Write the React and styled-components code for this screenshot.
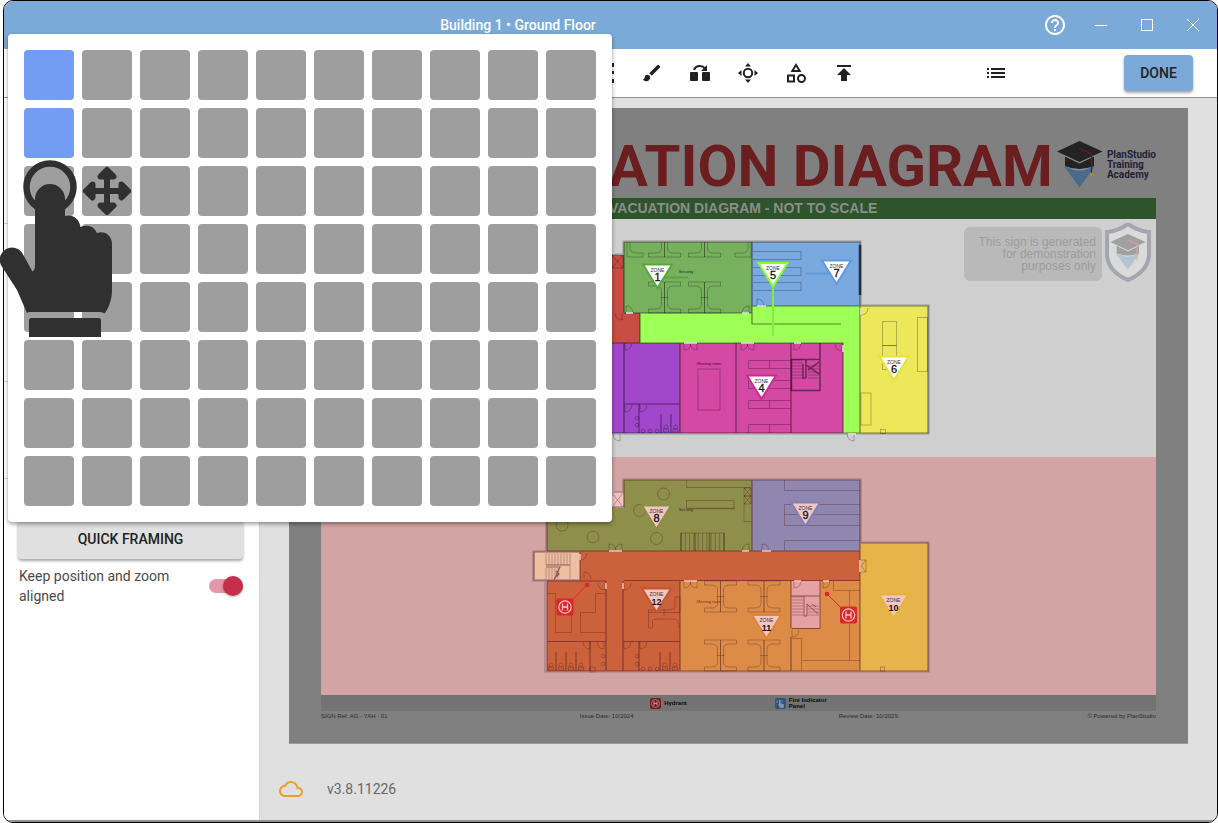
import React from "react";
import styled, { createGlobalStyle } from "styled-components";
import {
  MdBrush,
  MdCloudQueue,
  MdHelpOutline,
  MdList,
  MdOutlineCategory,
  MdPublish,
} from "react-icons/md";

const GlobalStyle = createGlobalStyle`
  *, *::before, *::after { box-sizing: border-box; }
  body {
    margin: 0;
    background: #ffffff;
    font-family: Roboto, "Liberation Sans", sans-serif;
    font-size: 14px;
    color: #222222;
  }
  button { font-family: inherit; }
`;

const Page = styled.div`
  position: relative;
  min-height: 100vh;
  padding-left: 3px;
  display: flex;
`;

const Window = styled.div`
  flex: 1;
  min-width: 0;
  display: flex;
  flex-direction: column;
  border: 1px solid #000000;
  border-radius: 10px;
  overflow: hidden;
  background: #ffffff;
`;

const TitleBar = styled.header`
  display: flex;
  align-items: center;
  height: 48px;
  padding-right: 1px;
  background: #7baad8;
  color: #ffffff;
`;

const WindowTitle = styled.div`
  flex: 1;
  text-align: center;
  font-size: 14px;
  font-weight: 500;
  line-height: 20px;
`;

const WindowButton = styled.button`
  display: flex;
  align-items: center;
  justify-content: center;
  width: 46px;
  height: 48px;
  padding: 0;
  border: 0;
  background: transparent;
  color: inherit;
`;

const Toolbar = styled.div`
  display: flex;
  align-items: center;
  justify-content: flex-end;
  gap: 104px;
  height: 49px;
  padding-right: 24px;
  border-bottom: 1px solid #8f8f8f;
`;

const ToolGroup = styled.div`
  display: flex;
`;

const ToolButton = styled.button`
  display: flex;
  align-items: center;
  justify-content: center;
  width: 48px;
  height: 48px;
  padding: 0;
  border: 0;
  background: transparent;
  color: #212121;
`;

const RaisedButton = styled.button`
  width: ${(p) => (p.$block ? "100%" : "69px")};
  height: ${(p) => (p.$block ? "40px" : "36px")};
  padding: 0;
  border: 0;
  border-radius: 4px;
  background: ${(p) => (p.$primary ? "#7baad8" : "#e0e0e0")};
  color: #222222;
  font-size: 14px;
  font-weight: 500;
  line-height: 20px;
  box-shadow: 0 2px 3px rgba(0, 0, 0, 0.35);
`;

const Body = styled.div`
  flex: 1;
  display: flex;
  border-bottom: 2px solid #8f8f8f;
`;

const Sidebar = styled.aside`
  flex: none;
  width: 256px;
  border-right: 1px solid #d6d6d6;
  background: #ffffff;
`;

const SidebarSection = styled.section`
  height: ${(p) => p.$size}px;
  border-bottom: 1px solid #d9d9d9;
`;

const Framing = styled.section`
  padding: 40px 16px 0 14px;
`;

const SwitchRow = styled.label`
  display: flex;
  align-items: center;
  justify-content: space-between;
  gap: 24px;
  margin-top: 7px;
  padding-left: 1px;
  font-size: 14px;
  line-height: 20px;
  color: #4a4a4a;
`;

const Switch = styled.input`
  appearance: none;
  flex: none;
  display: flex;
  align-items: center;
  justify-content: flex-end;
  width: 34px;
  height: 14px;
  margin: 0;
  border-radius: 7px;
  background: #e497a7;
  &::before {
    content: "";
    flex: none;
    width: 20px;
    height: 20px;
    border-radius: 50%;
    background: #c62f4c;
    box-shadow: 0 1px 3px rgba(0, 0, 0, 0.3);
  }
`;

const Main = styled.main`
  flex: 1;
  min-width: 0;
  padding: 10px 29px 0;
  background: #e0e0e0;
`;

const Sheet = styled.article`
  padding: 0 32px 21px;
  background: #808080;
  border-bottom: 1px solid #9a9a9a;
`;

const SheetHeader = styled.header`
  display: flex;
  justify-content: flex-end;
  align-items: flex-end;
  gap: 4px;
  height: 90px;
`;

const SheetTitle = styled.h1`
  margin: 0;
  font-size: 58px;
  font-weight: 700;
  line-height: 64px;
  white-space: nowrap;
  color: #6a1e20;
`;

const Brand = styled.div`
  display: flex;
  align-items: center;
  gap: 4px;
  padding-bottom: 10px;
  font-size: 10px;
  font-weight: 700;
  line-height: 10px;
  white-space: nowrap;
  color: #1f1f38;
`;

const Banner = styled.div`
  height: 21px;
  background: #2d542a;
  color: #8c8c8c;
  font-family: "Liberation Sans", sans-serif;
  font-size: 14px;
  font-weight: 700;
  line-height: 21px;
  text-align: center;
  white-space: nowrap;
`;

const Plan = styled.div`
  position: relative;
  background: ${(p) => p.$tint};
  svg.plan {
    display: block;
    width: 100%;
    height: auto;
  }
`;

const Notice = styled.div`
  position: absolute;
  top: 4px;
  right: 4px;
  display: flex;
  align-items: center;
  gap: 2px;
`;

const NoticeText = styled.p`
  width: 138px;
  margin: 0;
  padding: 9px 6px;
  border-radius: 6px;
  background: #b9b9b9;
  color: #9c9c9c;
  font-family: "Liberation Sans", sans-serif;
  font-size: 12px;
  line-height: 12px;
  text-align: right;
  white-space: nowrap;
`;

const Legend = styled.div`
  display: flex;
  justify-content: center;
  gap: 88px;
  height: 16px;
  background: #737373;
`;

const LegendItem = styled.div`
  display: flex;
  align-items: center;
  gap: 3px;
  color: #0c0c0c;
  font-family: "Liberation Sans", sans-serif;
  font-size: 6px;
  font-weight: 700;
  line-height: 6px;
`;

const SheetFooter = styled.footer`
  display: grid;
  grid-template-columns: 31% 31% 1fr auto;
  color: #2c2c2c;
  font-family: "Liberation Sans", sans-serif;
  font-size: 6px;
  line-height: 11px;
`;

const StatusBar = styled.footer`
  display: flex;
  align-items: center;
  gap: 24px;
  margin: 33px -10px 0;
  font-size: 14px;
  line-height: 20px;
  color: #666666;
`;

const CellPanel = styled.div`
  position: absolute;
  top: 34px;
  left: 8px;
  display: grid;
  grid-template-columns: repeat(10, 50px);
  grid-auto-rows: 50px;
  gap: 8px;
  padding: 16px;
  border-radius: 4px;
  background: #ffffff;
  box-shadow: 0 2px 4px rgba(0, 0, 0, 0.4);
`;

const Cell = styled.button`
  padding: 0;
  border: 0;
  border-radius: 4px;
  background: ${(p) => (p.$selected ? "#739df2" : "#9e9e9e")};
`;

const Gesture = styled.svg`
  position: absolute;
  top: 158px;
  left: 0;
  pointer-events: none;
`;

/* ---------- icons ---------- */

const MinimizeIcon = () => (
  <svg width="14" height="14" viewBox="0 0 14 14" stroke="currentColor" fill="none">
    <path d="M1 7.5H13" />
  </svg>
);
const MaximizeIcon = () => (
  <svg width="14" height="14" viewBox="0 0 14 14" stroke="currentColor" fill="none">
    <rect x="1.500" y="1.500" width="11" height="11" />
  </svg>
);
const CloseIcon = () => (
  <svg width="14" height="14" viewBox="0 0 14 14" stroke="currentColor" fill="none">
    <path d="M1 1L13 13M13 1L1 13" />
  </svg>
);
const GridIcon = () => (
  <svg width="24" height="24" viewBox="0 0 24 24" fill="currentColor">
    <path d="M2 2h4v4H2zM10 2h4v4h-4zM18 2h4v4h-4zM2 10h4v3H2zM10 10h4v3h-4zM18 10h4v3h-4zM2 18h4v4H2zM10 18h4v4h-4zM18 18h4v4h-4z" />
  </svg>
);
const SwapIcon = () => (
  <svg width="24" height="24" viewBox="0 0 24 24">
    <rect x="2" y="11" width="8" height="9" rx="1" fill="currentColor" />
    <rect x="14" y="11" width="8" height="9" rx="1" fill="currentColor" />
    <path d="M6 9C7.500 4.500 14 3.600 17 7.600" fill="none" stroke="currentColor" strokeWidth="2" />
    <path d="M19 4V10H13z" fill="currentColor" />
  </svg>
);
const RecenterIcon = () => (
  <svg width="24" height="24" viewBox="0 0 24 24" fill="currentColor">
    <circle cx="12" cy="12" r="4.200" fill="none" stroke="currentColor" strokeWidth="2" />
    <path d="M12 2L15 5.500H9zM12 22L9 18.500H15zM2 12L5.500 9V15zM22 12L18.500 15V9z" />
  </svg>
);

const CapShapes = () => (
  <>
    <path d="M8 25Q8 27 9 28L22.500 46.500L36 28Q37 27 37 25Q22 31 8 25z" fill="#4a6a8c" />
    <path d="M10 26Q22 21 35 26Q22 33 10 26z" fill="#8d9399" />
    <path d="M8 15V25Q22 31 37 25V15L22.500 22z" fill="#232323" />
    <path d="M7 14.500L22.500 22L38 14.500" fill="none" stroke="#8a8a8a" />
    <path d="M0 10.500L22.500 0L45.500 10.500L22.500 21z" fill="#232323" />
    <path d="M22.500 7.500L34.500 13V32" fill="none" stroke="#6d1730" strokeWidth="1.200" />
    <circle cx="34.500" cy="33.500" r="1.800" fill="#a58a32" />
  </>
);
const BrandMark = () => (
  <svg width="46" height="47" viewBox="0 0 46 47">
    <CapShapes />
  </svg>
);
const FadedCapShapes = () => (
  <>
    <path d="M8 25Q8 27 9 28L22.500 46.500L36 28Q37 27 37 25Q22 31 8 25z" fill="#b4c3d2" />
    <path d="M10 26Q22 21 35 26Q22 33 10 26z" fill="#dcdcdc" />
    <path d="M8 15V25Q22 31 37 25V15L22.500 22z" fill="#a0a0a0" />
    <path d="M7 14.500L22.500 22L38 14.500" fill="none" stroke="#d8d8d8" />
    <path d="M0 10.500L22.500 0L45.500 10.500L22.500 21z" fill="#a0a0a0" />
    <path d="M22.500 7.500L34.500 13V32" fill="none" stroke="#dba79c" strokeWidth="1.400" />
    <circle cx="34.500" cy="33.500" r="1.800" fill="#d8cda8" />
  </>
);
const ShieldMark = () => (
  <svg width="48" height="62" viewBox="0 2 48 62">
    <path
      d="M24 3Q34 10 45 11V35Q43 51 24 59Q5 51 3 35V11Q14 10 24 3z"
      fill="#dadada"
      stroke="#a3a6b0"
      strokeWidth="4"
    />
    <g transform="translate(6.500 13) scale(.77)">
      <FadedCapShapes />
    </g>
  </svg>
);
const HydrantIcon = () => (
  <svg width="11" height="11" viewBox="0 0 11 11">
    <rect width="11" height="11" rx="2" fill="#7d1a1d" />
    <circle cx="5.500" cy="5.500" r="4" fill="none" stroke="#a88a8a" strokeWidth=".8" />
    <path d="M4 3.300V7.700M7 3.300V7.700M4 5.500H7" stroke="#b09a9a" fill="none" />
  </svg>
);
const PanelIcon = () => (
  <svg width="11" height="11" viewBox="0 0 11 11">
    <rect width="11" height="11" rx="2" fill="#2f5480" />
    <path d="M4 2V6L3 6L5 10H8.500L9 6.500L5.500 5V2z" fill="#8295a8" />
    <path d="M2 2V5M7 2V4" stroke="#7085a0" fill="none" />
  </svg>
);

/* ---------- floor plan parts (drawn in plan units) ---------- */

const Zone = ({ x, y, n, color, fill = "#ffffff" }) => (
  <g>
    <path d={`M${x - 14.5} ${y}H${x + 14.5}L${x} ${y + 23.5}z`} fill={fill} stroke={color} strokeWidth="2" />
    <text x={x} y={y + 7} fontSize="5" fill="#333333">ZONE</text>
    <text x={x} y={y + 16} fontSize={n > 9 ? 9 : 11} fontWeight={n > 9 ? 700 : 400} fill="#111111" stroke="#111111" strokeWidth={n > 9 ? 0 : 0.3}>
      {n}
    </text>
  </g>
);

const Desks = ({ x, y1, y2, sides = [-1, 1], half }) => (
  <path
    d={sides
      .map((s) =>
        half
          ? `M${x} ${y1}V${y2}H${x + 16 * s}V${y2 - 4}H${x + 9 * s}Q${x + 3 * s} ${y2 - 4} ${x + 3 * s} ${y2 - 9}V${y1}`
          : `M${x + 16 * s} ${y1}V${y1 + 4}H${x + 9 * s}Q${x + 3 * s} ${y1 + 4} ${x + 3 * s} ${y1 + 9}V${y2 - 9}Q${x + 3 * s} ${y2 - 4} ${x + 9 * s} ${y2 - 4}H${x + 16 * s}V${y2}H${x}V${y1}zM${x} ${(y1 + y2) / 2}H${x + 4 * s}`
      )
      .join("")}
  />
);

const Treads = ({ x, y, w, h, step = 3, vertical }) => {
  let d = "";
  if (vertical) for (let i = 0; i <= w; i += step) d += `M${x + i} ${y}v${h}`;
  else for (let i = 0; i <= h; i += step) d += `M${x} ${y + i}h${w}`;
  return <path d={d} />;
};

const Door = ({ x, y, sx = 1, sy = 1, r = 7 }) => (
  <path d={`M${x} ${y}v${r * sy}q${r * sx * 0.9} 0 ${r * sx} ${-r * sy}`} />
);

const Toilet = ({ x, y }) => (
  <g>
    <circle cx={x} cy={y} r="2" />
    <rect x={x - 2.5} y={y + 2} width="5" height="3" />
  </g>
);

const Basin = ({ x, y }) => <circle cx={x} cy={y} r="1.800" />;

const Hydrant = ({ x, y, px, py }) => (
  <g fill="none">
    <path d={`M${x} ${y}L${px} ${py}`} stroke="#d8282b" />
    <circle cx={px} cy={py} r="2.300" fill="#d8282b" />
    <rect x={x - 8.5} y={y - 8.5} width="17" height="17" rx="2" fill="#d8282b" />
    <circle cx={x} cy={y} r="6.200" stroke="#f3c4c4" strokeWidth="1.200" />
    <path d={`M${x - 2.5} ${y - 3.500}v7M${x + 2.5} ${y - 3.500}v7M${x - 2.5} ${y}h5`} stroke="#f3c4c4" strokeWidth="1.300" />
  </g>
);

const GroundPlan = () => (
  <svg className="plan" viewBox="321 219 835 238" fontFamily="Liberation Sans, sans-serif" textAnchor="middle">
    <path d="M546 255H616V254H623V241H861V305H929V434H546z" fill="#dcdcdc" stroke="#9a9a9a" strokeWidth="1.200" />
    <path d="M547 255H624V313H640V343H547z" fill="#c94d45" />
    <rect x="624" y="242" width="128" height="71" fill="#78b15e" />
    <rect x="752" y="242" width="108" height="64" fill="#7aa9e0" />
    <path d="M640 313H752V306H860V433H843V343H640z" fill="#9eff57" />
    <rect x="547" y="343" width="133" height="90" fill="#a147cb" />
    <rect x="680" y="343" width="163" height="90" fill="#d349a3" />
    <rect x="860" y="306" width="68" height="127" fill="#ece85a" />
    <g fill="none" stroke="#000000" strokeOpacity=".48">
      <path d="M624 242H860V306H928V433H547M624 242V313M752 242V324H841M624 313H752M860 306V433M752 306H860M640 313V343M547 343H843V433M680 343V433M736 343V433M791 343V433M624 343V433M624 404H680" strokeWidth="1.200" />
      <path d="M791.500 359.500H820V390.500H791.500zM820 343V360" strokeWidth="1.500" />
      <path d="M806 360V378M803 364V378H806M806 365L819 374M808 370L819 362" strokeWidth="1.500" />
    </g>
    <g fill="none" stroke="#000000" strokeOpacity=".32" strokeWidth=".8">
      <Desks x={627} y1={242} y2={257} sides={[1]} half />
      <Desks x={664.5} y1={242} y2={257} half />
      <Desks x={704.5} y1={242} y2={257} half />
      <Desks x={751} y1={242} y2={257} sides={[-1]} half />
      <Desks x={664.5} y1={282} y2={313} />
      <Desks x={704.5} y1={282} y2={313} />
      <path d="M753 251.500H801V259.500H753M753 267.500H801V275.500H753M753 282.500H801V290.500H753" />
      <path d="M748.500 360.500H791M748.500 360.500V368.500H791M748.500 380.500V388.500H791M748.500 380.500H791M748.500 400.500V408.500H791M748.500 400.500H791M748.500 424.500V433M748.500 424.500H791M769.500 360.500V368.500M769.500 400.500V408.500M769.500 424.500V433" />
      <rect x="698" y="369" width="22" height="41" />
      <rect x="882.500" y="321.500" width="14" height="24" />
      <rect x="882.500" y="345.500" width="14" height="24" />
      <rect x="917.500" y="317.500" width="10" height="54" />
      <rect x="861" y="393" width="10" height="32" />
      <rect x="880.500" y="429.500" width="5" height="4" />
      <path d="M612 255H623V268H612zM612 255L623 268M623 255L612 268" />
      <path d="M661 414V433M671 414V433M639 404V433" strokeWidth="1.500" />
      <Toilet x={666} y={427} />
      <Toilet x={675.5} y={427} />
      <Basin x={643} y={431} />
      <Basin x={650} y={431} />
      <Basin x={657} y={431} />
      <Basin x={637} y={418} />
      <Basin x={637} y={425} />
      <Treads x={792} y={360} w={11} h={20} />
      <Treads x={808} y={366} w={11} h={12} />
      <Door x={626} y={313} sy={-1} />
      <Door x={749} y={313} sx={-1} sy={-1} />
      <Door x={757} y={306} sy={-1} />
      <Door x={684} y={343} />
      <Door x={697} y={343} sx={-1} />
      <Door x={741} y={343} />
      <Door x={754} y={343} sx={-1} />
      <Door x={794} y={343} />
      <Door x={842} y={344} sx={-1} />
      <Door x={625} y={343} />
      <Door x={625} y={405} />
      <Door x={640} y={405} />
      <Door x={861} y={308} />
      <Door x={854} y={434} sx={-1} />
      <Door x={620} y={434} sx={-1} />
      <Door x={622} y={313} sx={-1} />
    </g>
    <path d="M684 343H697M741 343H754M794 343H801M626 313H633M742 313H749M757 306H766M843 345V352M848 434H856M861 308V315" stroke="#e8e8e8" strokeWidth="1.500" />
    <path d="M860 245V295" stroke="#2b2b33" strokeWidth="2.500" />
    <path d="M657 277.500H688" stroke="#58a83c" strokeWidth="2" />
    <path d="M806 273.500H832" stroke="#5f9be0" strokeWidth="2" />
    <path d="M773 285V336" stroke="#7ff03c" strokeWidth="2" />
    <text x="686" y="273" fontSize="4" fill="#222222">Security</text>
    <text x="709" y="365" fontSize="4" fill="#4a1538">Meeting room</text>
    <Zone x={657.5} y={264.5} n={1} color="#58a83c" />
    <Zone x={773} y={263} n={5} color="#86ff2e" />
    <Zone x={836.5} y={260.5} n={7} color="#5f9be0" />
    <Zone x={761.5} y={375.5} n={4} color="#cb2a96" />
    <Zone x={894} y={356.5} n={6} color="#e8e23c" />
  </svg>
);

const PINK = "#f3c6c6";

const UpperPlan = () => (
  <svg className="plan" viewBox="321 457 835 238" fontFamily="Liberation Sans, sans-serif" textAnchor="middle">
    <path d="M546 507H615V492H623V479H861V542H929V672H545V581H533V551H546z" fill="#dcb4b4" stroke="#a17a7e" strokeWidth="1.200" />
    <path d="M547 508H624V480H752V551H547z" fill="#8e8f4b" />
    <rect x="752" y="480" width="108" height="71" fill="#9087b0" />
    <path d="M580 551H860V581H680V671H547V581H580z" fill="#cc623b" />
    <rect x="534" y="552" width="46" height="28" fill="#efbfa4" />
    <rect x="680" y="581" width="180" height="90" fill="#dc8c47" />
    <rect x="791" y="581" width="29" height="47" fill="#e6a1a3" />
    <rect x="860" y="543" width="68" height="128" fill="#e6b44b" />
    <rect x="612" y="493" width="11" height="14" fill="#f0c0c4" />
    <g fill="none" stroke="#5a1a20" strokeOpacity=".58">
      <path d="M624 480H860V671M752 480V551M547 551H860M860 543H928V671H547V581H606M547 508V551M624 580.500H860M680 581V671M606 581V671M623 581V671M547 641.500H606M623 641.500H680M534 552H580V580H534zM612 507H624V480M791 581V628M791 637V671" strokeWidth="1.200" />
      <path d="M791.500 628.500H820V581M820 596H791" />
      <path d="M804 596V616H807V604L818 614M812 604L816 607" />
      <path d="M546 565H570M546 567H560L554 580M556 571L559 574L556 577" strokeWidth="1.200" />
    </g>
    <g fill="none" stroke="#4a1a1a" strokeOpacity=".4" strokeWidth=".8">
      <circle cx="663.500" cy="494" r="6" />
      <circle cx="639.500" cy="510.500" r="6" />
      <circle cx="656.500" cy="538.500" r="6" />
      <circle cx="593" cy="537" r="6" />
      <circle cx="562" cy="525" r="6" />
      <path d="M612 493L623 507M623 493L612 507" />
      <path d="M751 487.500H686.500V480M686.500 508V500.500H734V508" />
      <path d="M686.500 508.500H735" strokeWidth="1.500" />
      <path d="M744 488h7v8h-7zl7 8m0-8l-7 8M744 496h7v8h-7zl7 8m0-8l-7 8M744 504v17.500h7" />
      <path d="M784.500 480V490.500H860M784.500 504.500H860M784.500 504.500V525.500H860M784.500 514.500H860M784.500 551V540.500H860" />
      <Treads x={681} y={533} w={43} h={18} step={4.3} vertical />
      <path d="M681 533H724" />
      <path d="M681 533V551M695 533V551M709.500 533V551M724 533V551" strokeWidth="1.500" />
      <Treads x={546} y={553} w={24} h={12} vertical />
      <Treads x={546} y={568} w={12} h={11} vertical />
      <path d="M570 565V579" />
      <Treads x={792} y={597} w={11} h={18} />
      <Treads x={808} y={606} w={11} h={10} />
      <path d="M547 593.500H555.500V632.500H571.500V612.500H563M605 593.500H595.500V612.500H580.500V632.500H605" />
      <path d="M680 597H675V607Q675 610 665 610H648.500V628H652.500V622Q652 619 658 619H674Q679 619 679 628M664 609V616M648.500 612.500H680V597" />
      <path d="M833.500 581V590.500H860M849.500 590.500V660.500M802 660.500H860M792 638.500H801.500V671" />
      <Desks x={720.5} y1={581} y2={612} />
      <Desks x={720.5} y1={640} y2={671} />
      <Desks x={764} y1={581} y2={612} />
      <Desks x={764} y1={640} y2={671} />
      <path d="M556 652V671M566 652V671M576 652V671M590 641V671M660 652V671M670 652V671M639 641V671" strokeWidth="1.500" />
      <Toilet x={551} y={665} />
      <Toilet x={561} y={665} />
      <Toilet x={571} y={665} />
      <Toilet x={581} y={665} />
      <Toilet x={665} y={665} />
      <Toilet x={675} y={665} />
      <Basin x={643} y={669} />
      <Basin x={650} y={669} />
      <Basin x={657} y={669} />
      <Basin x={603} y={656} />
      <Basin x={603} y={664} />
      <Basin x={637} y={656} />
      <Basin x={637} y={664} />
      <rect x="590" y="667" width="5" height="5" />
      <rect x="880.500" y="667" width="4" height="4" />
      <Door x={609} y={551} sy={-1} />
      <Door x={622} y={551} sx={-1} sy={-1} />
      <Door x={749} y={551} sx={-1} sy={-1} />
      <Door x={762} y={551} sy={-1} />
      <Door x={580} y={553} />
      <Door x={584} y={579} sy={-1} />
      <Door x={605} y={583} sx={-1} />
      <Door x={624} y={583} />
      <Door x={684} y={581} />
      <Door x={697} y={581} sx={-1} />
      <Door x={794} y={581} />
      <Door x={823} y={581} />
      <Door x={792} y={630} />
      <Door x={590} y={642} sx={-1} />
      <Door x={604} y={642} sx={-1} />
      <Door x={624} y={642} />
      <Door x={640} y={642} />
      <path d="M860 560H866V572H860M861 566L866 560M861 566L866 572" />
    </g>
    <path d="M609 551H622M742 551H749M762 551H771M684 581H697M794 581H801M823 581H829M860 560V572M580 554V560M606 583V589M623 583V589" stroke={PINK} strokeWidth="1.500" />
    <text x="686" y="511" fontSize="4" fill="#4a2a1a">Security</text>
    <text x="709" y="603" fontSize="4" fill="#6a3a1a">Meeting room</text>
    <Zone x={656.5} y={505.5} n={8} color="#8a9040" fill={PINK} />
    <Zone x={805.5} y={502.5} n={9} color="#8480b4" fill={PINK} />
    <Zone x={656.5} y={588.5} n={12} color="#c8552a" fill={PINK} />
    <Zone x={766.5} y={615} n={11} color="#e08430" fill={PINK} />
    <Zone x={893.5} y={594.5} n={10} color="#e8b438" fill={PINK} />
    <Hydrant x={565} y={607} px={587} py={585} />
    <Hydrant x={848.5} y={615} px={827} py={594} />
  </svg>
);

const COLUMNS = 10;
const ROWS = 8;
const SELECTED = [0, 10];

export default function App() {
  return (
    <Page>
      <GlobalStyle />
      <Window>
        <TitleBar>
          <WindowTitle>Building 1 • Ground Floor</WindowTitle>
          <WindowButton aria-label="Help"><MdHelpOutline size={24} /></WindowButton>
          <WindowButton aria-label="Minimize"><MinimizeIcon /></WindowButton>
          <WindowButton aria-label="Maximize"><MaximizeIcon /></WindowButton>
          <WindowButton aria-label="Close"><CloseIcon /></WindowButton>
        </TitleBar>
        <Toolbar>
          <ToolGroup>
            <ToolButton aria-label="Grid"><GridIcon /></ToolButton>
            <ToolButton aria-label="Brush"><MdBrush size={22} /></ToolButton>
            <ToolButton aria-label="Swap"><SwapIcon /></ToolButton>
            <ToolButton aria-label="Recenter"><RecenterIcon /></ToolButton>
            <ToolButton aria-label="Symbols"><MdOutlineCategory size={24} /></ToolButton>
            <ToolButton aria-label="Bring to top"><MdPublish size={24} /></ToolButton>
          </ToolGroup>
          <ToolButton aria-label="List"><MdList size={24} /></ToolButton>
          <RaisedButton $primary>DONE</RaisedButton>
        </Toolbar>
        <Body>
          <Sidebar>
            <SidebarSection $size={126} />
            <SidebarSection $size={158} />
            <SidebarSection $size={97} />
            <Framing>
              <RaisedButton $block>QUICK FRAMING</RaisedButton>
              <SwitchRow>
                Keep position and zoom aligned
                <Switch type="checkbox" role="switch" defaultChecked />
              </SwitchRow>
            </Framing>
          </Sidebar>
          <Main>
            <Sheet>
              <SheetHeader>
                <SheetTitle>EVACUATION DIAGRAM</SheetTitle>
                <Brand>
                  <BrandMark />
                  <div>
                    PlanStudio
                    <br />
                    Training
                    <br />
                    Academy
                  </div>
                </Brand>
              </SheetHeader>
              <Banner>EVACUATION DIAGRAM - NOT TO SCALE</Banner>
              <Plan $tint="#cfcfcf">
                <GroundPlan />
                <Notice>
                  <NoticeText>
                    This sign is generated
                    <br />
                    for demonstration
                    <br />
                    purposes only
                  </NoticeText>
                  <ShieldMark />
                </Notice>
              </Plan>
              <Plan $tint="#d2a4a4">
                <UpperPlan />
              </Plan>
              <Legend>
                <LegendItem><HydrantIcon /><span>Hydrant</span></LegendItem>
                <LegendItem><PanelIcon /><span>Fire Indicator<br />Panel</span></LegendItem>
              </Legend>
              <SheetFooter>
                <span>SIGN Ref: AG - YAH - 01</span>
                <span>Issue Date: 10/2024</span>
                <span>Review Date: 10/2029</span>
                <span>© Powered by PlanStudio</span>
              </SheetFooter>
            </Sheet>
            <StatusBar>
              <MdCloudQueue size={24} color="#e8a02e" />
              <span>v3.8.11226</span>
            </StatusBar>
          </Main>
        </Body>
      </Window>
      <CellPanel>
        {Array.from({ length: COLUMNS * ROWS }, (_, i) => (
          <Cell
            key={i}
            $selected={SELECTED.includes(i)}
            aria-label={`Row ${Math.floor(i / COLUMNS) + 1}, column ${(i % COLUMNS) + 1}`}
          />
        ))}
      </CellPanel>
      <Gesture width="136" height="182" viewBox="0 158 136 182" fill="#303030">
        <circle cx="50" cy="187" r="23.500" fill="none" stroke="#303030" strokeWidth="6.500" />
        <path d="M35 199A15 15 0 0 1 65 199V216C72 214 79 218 80.500 227C87 224 94 226 97 233C104 230 112 235 112 244V290C112 301 108 309 104.500 313.500Q103 312 100 312H30Q28 312 27 313L17 290L1.500 266A12 12 0 0 1 22.500 253.500L32.500 271.500Q35 270 35 265z" />
        <path d="M29 337V320.500Q29 318 31.500 318H98.500Q101 318 101 320.500V337z" />
        <path
          d="M107 172V210M88 191H126M100.500 176.500L107 170L113.500 176.500zM100.500 205.500L107 212L113.500 205.500zM92.500 184.500L86 191L92.500 197.500zM121.500 184.500L128 191L121.500 197.500z"
          stroke="#303030"
          strokeWidth="6"
          strokeLinecap="round"
          strokeLinejoin="round"
        />
      </Gesture>
    </Page>
  );
}
